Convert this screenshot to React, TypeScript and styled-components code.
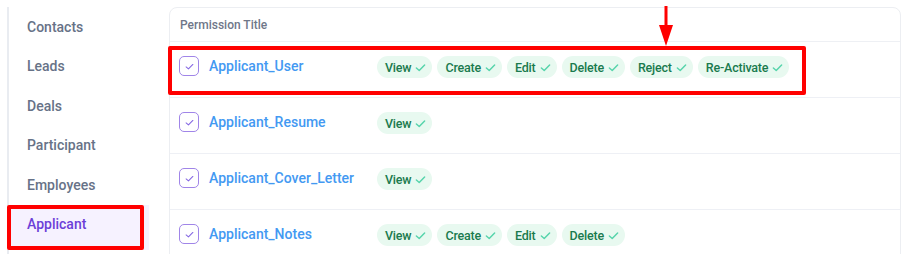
import styled, { createGlobalStyle } from 'styled-components';

const GlobalStyle = createGlobalStyle`
  body {
    margin: 0;
    background: #ffffff;
    font-family: Roboto, "Liberation Sans", sans-serif;
  }
`;

const menu = ['Contacts', 'Leads', 'Deals', 'Participant', 'Employees', 'Applicant'];

const permissions = [
  { title: 'Applicant_User', actions: ['View', 'Create', 'Edit', 'Delete', 'Reject', 'Re-Activate'], marked: true },
  { title: 'Applicant_Resume', actions: ['View'] },
  { title: 'Applicant_Cover_Letter', actions: ['View'] },
  { title: 'Applicant_Notes', actions: ['View', 'Create', 'Edit', 'Delete'] },
];

const Tick = ({ color, size = 11, weight = 1.6 }: { color: string; size?: number; weight?: number }) => (
  <svg width={size} height={size} viewBox="0 0 12 12" fill="none">
    <path d="M1.5 6.6 L4.6 9.3 L10.5 3.3" stroke={color} strokeWidth={weight} strokeLinecap="round" strokeLinejoin="round" />
  </svg>
);

const Arrow = () => (
  <svg width="14" height="40" viewBox="0 0 14 40">
    <rect x="5.5" y="0" width="3" height="22" fill="#ff0000" />
    <polygon points="0,19 14,19 7,40" fill="#ff0000" />
  </svg>
);

export default function App() {
  return (
    <>
      <GlobalStyle />
      <Page>
        <Sidebar>
          {menu.map(item => (
            <MenuItem key={item} $active={item === 'Applicant'}>
              {item}
              {item === 'Applicant' && <MenuMark />}
            </MenuItem>
          ))}
        </Sidebar>
        <Card>
          <Header>Permission Title</Header>
          {permissions.map(p => (
            <Row key={p.title}>
              <Checkbox>
                <Tick color="#8466e2" size={9} weight={1.4} />
              </Checkbox>
              <Title>{p.title}</Title>
              <Chips>
                {p.actions.map(a => (
                  <Chip key={a}>
                    {a}
                    <Tick color="#56d4ab" />
                  </Chip>
                ))}
              </Chips>
              {p.marked && (
                <>
                  <RowMark />
                  <ArrowWrap>
                    <Arrow />
                  </ArrowWrap>
                </>
              )}
            </Row>
          ))}
        </Card>
      </Page>
    </>
  );
}

const Page = styled.div`
  display: flex;
  align-items: flex-start;
  padding-top: 7px;
  height: 247px;
  overflow: hidden;
`;

const Sidebar = styled.div`
  display: flex;
  flex-direction: column;
  width: 160px;
  margin-left: 7px;
  border-left: 2px solid #e9ecf1;
  flex-shrink: 0;
  height: 260px;
`;

const MenuItem = styled.div<{ $active?: boolean }>`
  position: relative;
  display: flex;
  align-items: center;
  width: 140px;
  box-sizing: border-box;
  height: ${p => (p.$active ? '45.5px' : '39.5px')};
  padding: ${p => (p.$active ? '0 0 6px 18px' : '0 0 0 18px')};
  font-size: 14px;
  font-weight: 500;
  color: ${p => (p.$active ? '#6c3fd8' : '#677287')};
  background: ${p => (p.$active ? '#f6f2ff' : 'transparent')};
`;

const MenuMark = styled.div`
  position: absolute;
  left: -2px;
  top: 0;
  width: 137px;
  height: 45px;
  box-sizing: border-box;
  border: 4px solid #ff0000;
  border-radius: 2px;
`;

const Card = styled.div`
  width: 732px;
  box-sizing: border-box;
  border: 1px solid #eceef2;
  border-radius: 8px;
  height: 260px;
`;

const Header = styled.div`
  height: 33px;
  display: flex;
  align-items: center;
  padding-left: 10px;
  font-size: 12px;
  font-weight: 500;
  color: #6f7789;
  border-bottom: 1px solid #eef0f4;
`;

const Row = styled.div`
  position: relative;
  display: flex;
  align-items: flex-start;
  height: 56px;
  padding: 14px 0 0 9px;
  box-sizing: border-box;
  border-bottom: 1px solid #eef0f5;
`;

const Checkbox = styled.div`
  display: flex;
  align-items: center;
  justify-content: center;
  width: 20px;
  height: 20px;
  box-sizing: border-box;
  border: 1.5px solid #a085e8;
  border-radius: 5px;
  background: #ffffff;
  flex-shrink: 0;
`;

const Title = styled.div`
  width: 168px;
  margin-left: 10px;
  line-height: 20px;
  font-size: 14px;
  font-weight: 500;
  color: #4399f2;
`;

const Chips = styled.div`
  display: flex;
  gap: 5px;
`;

const Chip = styled.div`
  display: flex;
  align-items: center;
  gap: 4px;
  height: 22px;
  padding: 0 6px 0 8px;
  border-radius: 11px;
  background: #e8f9f0;
  font-size: 12.5px;
  letter-spacing: -0.2px;
  font-weight: 500;
  color: #1a7b4e;
`;

const RowMark = styled.div`
  position: absolute;
  left: -2px;
  top: 4px;
  width: 638px;
  height: 49px;
  box-sizing: border-box;
  border: 4px solid #ff0000;
  border-radius: 2px;
`;

const ArrowWrap = styled.div`
  position: absolute;
  left: 489px;
  top: -36px;
  line-height: 0;
`;
